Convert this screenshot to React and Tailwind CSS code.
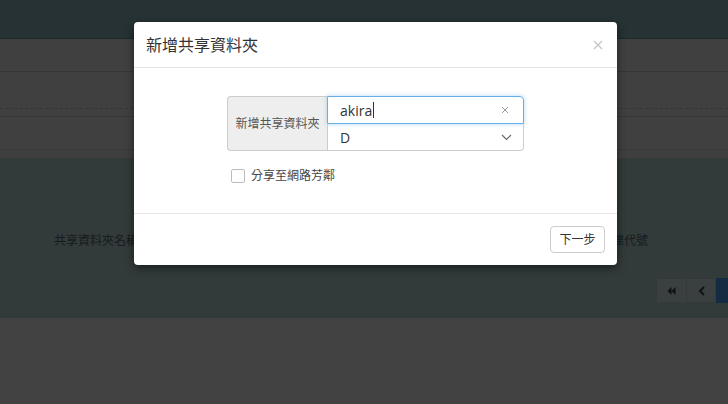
import React from "react";

export default function App() {
  const font = { fontFamily: '"Open Sans", "Noto Sans CJK TC", sans-serif' };
  return (
    <div
      className="relative w-[728px] h-[404px] overflow-hidden bg-[#424242]"
      style={font}
    >
      {/* background page (dimmed) */}
      <div className="flex flex-col">
        <div className="h-[39px] bg-[#263233] border-b border-[#1f2929]"></div>
        <div className="h-[33px] bg-[#404040] border-b border-[#363636]"></div>
        <div className="h-[37px] bg-[#404040] border-b border-dashed border-[#363636]"></div>
        <div className="h-[8px] bg-[#404040] border-b border-[#383838]"></div>
        <div className="h-[33px] bg-[#404040] border-b border-[#383838]"></div>
        <div className="h-[8px] bg-[#3f3f3f]"></div>
        <div className="h-[160px] bg-[#323a3a] flex flex-col">
          <div className="h-[73px]"></div>
          <div className="flex justify-between px-[54px] pr-[80px] text-[12px] text-[#161b1b] leading-[20px]">
            <span>共享資料夾名稱</span>
            <span>磁碟代號</span>
          </div>
          <div className="flex justify-end mt-[27px]">
            <div className="flex h-[25px]">
              <div className="w-[31px] flex items-center justify-center bg-[#3a3f3f] border border-[#333838] text-[#111] text-[10px]">
                <svg width="9" height="8" viewBox="0 0 9 8">
                  <path d="M4.5 0 L0.5 4 L4.5 8 Z M8.5 0 L4.5 4 L8.5 8 Z" fill="#111" />
                </svg>
              </div>
              <div className="w-[29px] flex items-center justify-center bg-[#3a3f3f] border border-[#333838] border-l-0">
                <svg width="7" height="10" viewBox="0 0 7 10">
                  <path d="M6 1 L2 5 L6 9" stroke="#111" strokeWidth="2" fill="none" />
                </svg>
              </div>
              <div className="w-[12px] bg-[#142b42]"></div>
            </div>
          </div>
        </div>
      </div>

      {/* modal */}
      <div className="absolute left-[134px] top-[22px] w-[483px] bg-white rounded-[4px] shadow-[0_3px_9px_rgba(0,0,0,0.5)] flex flex-col">
        <div className="h-[46px] flex items-center justify-between pl-[12px] pr-[14px] border-b border-[#e5e5e5]">
          <span className="text-[16px] text-[#333] leading-none">新增共享資料夾</span>
          <svg width="10" height="10" viewBox="0 0 10 10">
            <path d="M1 1 L9 9 M9 1 L1 9" stroke="#c4c4c4" strokeWidth="1.3" />
          </svg>
        </div>
        <div className="h-[145px] flex flex-col items-center pt-[28px]">
          <div className="flex w-[297px] h-[55px]">
            <div className="w-[100px] bg-[#eeeeee] border border-[#cccccc] border-r-0 rounded-l-[4px] flex items-center justify-center text-[12px] text-[#555]">
              新增共享資料夾
            </div>
            <div className="flex-1 flex flex-col">
              <div className="h-[28px] border border-[#66afe9] shadow-[0_0_4px_rgba(102,175,233,0.5)] rounded-tr-[4px] flex items-center justify-between pl-[12px] pr-[14px]">
                <span className="text-[14px] text-[#333] flex items-center">
                  akira
                  <span className="inline-block w-px h-[16px] bg-[#333] ml-[1px]"></span>
                </span>
                <svg width="8" height="8" viewBox="0 0 8 8">
                  <path d="M1 1 L7 7 M7 1 L1 7" stroke="#999" strokeWidth="1" />
                </svg>
              </div>
              <div className="h-[27px] border border-[#cccccc] border-t-0 rounded-br-[4px] flex items-center justify-between pl-[12px] pr-[11px]">
                <span className="text-[14px] text-[#333]">D</span>
                <svg width="11" height="7" viewBox="0 0 11 7">
                  <path d="M1 1 L5.5 5.5 L10 1" stroke="#666" strokeWidth="1.2" fill="none" />
                </svg>
              </div>
            </div>
          </div>
          <div className="w-[297px] flex items-center mt-[16px] pl-[4px]">
            <div className="w-[14px] h-[14px] border border-[#bbb] rounded-[2px] bg-white"></div>
            <span className="ml-[6px] text-[12px] text-[#444]">分享至網路芳鄰</span>
          </div>
        </div>
        <div className="h-[52px] border-t border-[#e5e5e5] flex items-center justify-end pr-[12px]">
          <div className="w-[55px] h-[27px] border border-[#cccccc] rounded-[4px] flex items-center justify-center text-[12px] text-[#333] bg-white">
            下一步
          </div>
        </div>
      </div>
    </div>
  );
}
